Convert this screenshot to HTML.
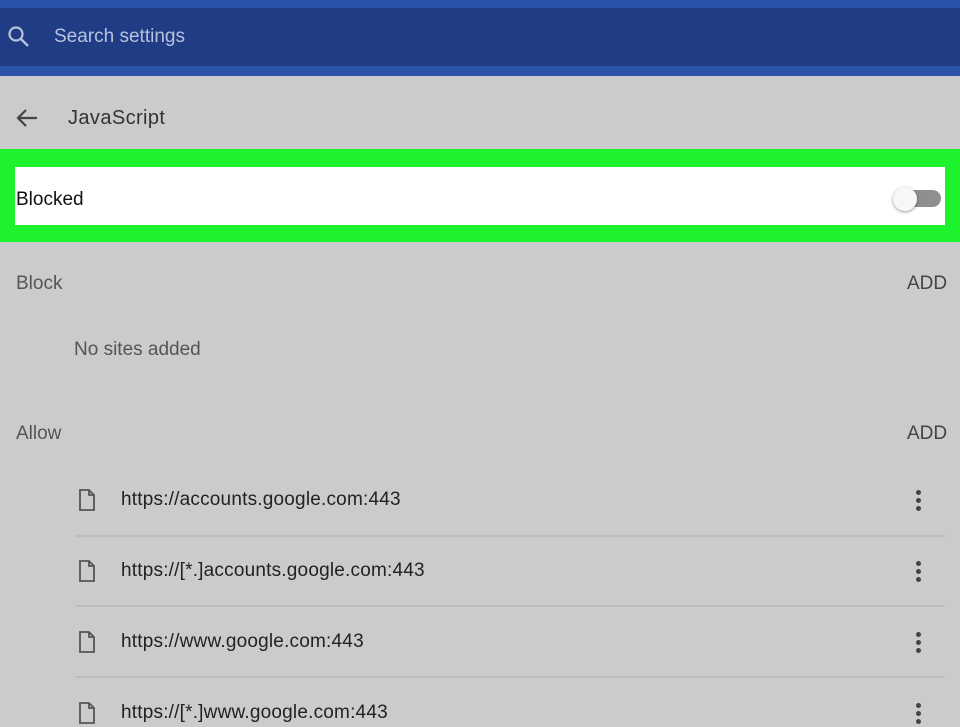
<!DOCTYPE html>
<html><head><style>
body{margin:0;width:960px;height:721px;overflow:hidden;background:#cbcbcb;font-family:"Liberation Sans",sans-serif;position:relative}
.a{position:absolute}
.t{color:#555;font-size:19px}
.u{color:#222;font-size:19px;left:121px;letter-spacing:0.2px}
.hr{left:75px;width:870px;height:2px;background:#bdbdbd}
.dots{left:916px;width:5px}
.dots i{display:block;width:5px;height:5px;border-radius:50%;background:#444;margin-bottom:3px}
</style></head><body>
<div class="a" style="left:0;top:0;width:960px;height:76px;background:#2b53aa"></div>
<div class="a" style="left:0;top:8px;width:960px;height:58px;background:#1f3c84"></div>
<svg class="a" style="left:6px;top:24px" width="26" height="26" viewBox="0 0 26 26"><circle cx="10" cy="10" r="6.5" fill="none" stroke="#b7c3dd" stroke-width="2.2"/><path d="M15 15 L22 22" stroke="#b7c3dd" stroke-width="2.4"/></svg>
<div class="a" style="left:54px;top:26px;font-size:19px;color:#b7c3dd">Search settings</div>
<svg class="a" style="left:15px;top:107px" width="24" height="22" viewBox="0 0 24 22"><path d="M22 11H4M11 3L3 11L11 19" fill="none" stroke="#444" stroke-width="2.2"/></svg>
<div class="a" style="left:68px;top:107px;font-size:20px;color:#333;letter-spacing:0.4px">JavaScript</div>
<div class="a" style="left:0;top:149px;width:960px;height:93px;background:#1ef22f"></div>
<div class="a" style="left:15px;top:167px;width:930px;height:58px;background:#fff"></div>
<div class="a" style="left:16px;top:189px;font-size:19px;color:#111">Blocked</div>
<div class="a" style="left:898px;top:190px;width:43px;height:17px;border-radius:9px;background:#8f8f8f"></div>
<div class="a" style="left:893px;top:187px;width:24px;height:24px;border-radius:50%;background:#f7f7f7;box-shadow:0 1px 3px rgba(0,0,0,.4)"></div>
<div class="a t" style="left:16px;top:273px">Block</div>
<div class="a t" style="left:907px;top:273px;color:#444">ADD</div>
<div class="a t" style="left:74px;top:339px">No sites added</div>
<div class="a t" style="left:16px;top:423px">Allow</div>
<div class="a t" style="left:907px;top:423px;color:#444">ADD</div>
<svg width="0" height="0" style="position:absolute"><defs><symbol id="f" viewBox="0 0 18 22"><path d="M2 1H11L16 6V21H2Z M11 1V6H16" fill="none" stroke="#555" stroke-width="1.8"/></symbol></defs></svg>
<svg class="a" style="left:78px;top:489px" width="18" height="22"><use href="#f"/></svg>
<div class="a u" style="top:489px">https://accounts.google.com:443</div>
<div class="a dots" style="top:490px"><i></i><i></i><i></i></div>
<div class="a hr" style="top:535px"></div>
<svg class="a" style="left:78px;top:560px" width="18" height="22"><use href="#f"/></svg>
<div class="a u" style="top:560px">https://[*.]accounts.google.com:443</div>
<div class="a dots" style="top:561px"><i></i><i></i><i></i></div>
<div class="a hr" style="top:605px"></div>
<svg class="a" style="left:78px;top:631px" width="18" height="22"><use href="#f"/></svg>
<div class="a u" style="top:631px">https://www.google.com:443</div>
<div class="a dots" style="top:632px"><i></i><i></i><i></i></div>
<div class="a hr" style="top:676px"></div>
<svg class="a" style="left:78px;top:702px" width="18" height="22"><use href="#f"/></svg>
<div class="a u" style="top:702px">https://[*.]www.google.com:443</div>
<div class="a dots" style="top:703px"><i></i><i></i><i></i></div>
</body></html>
